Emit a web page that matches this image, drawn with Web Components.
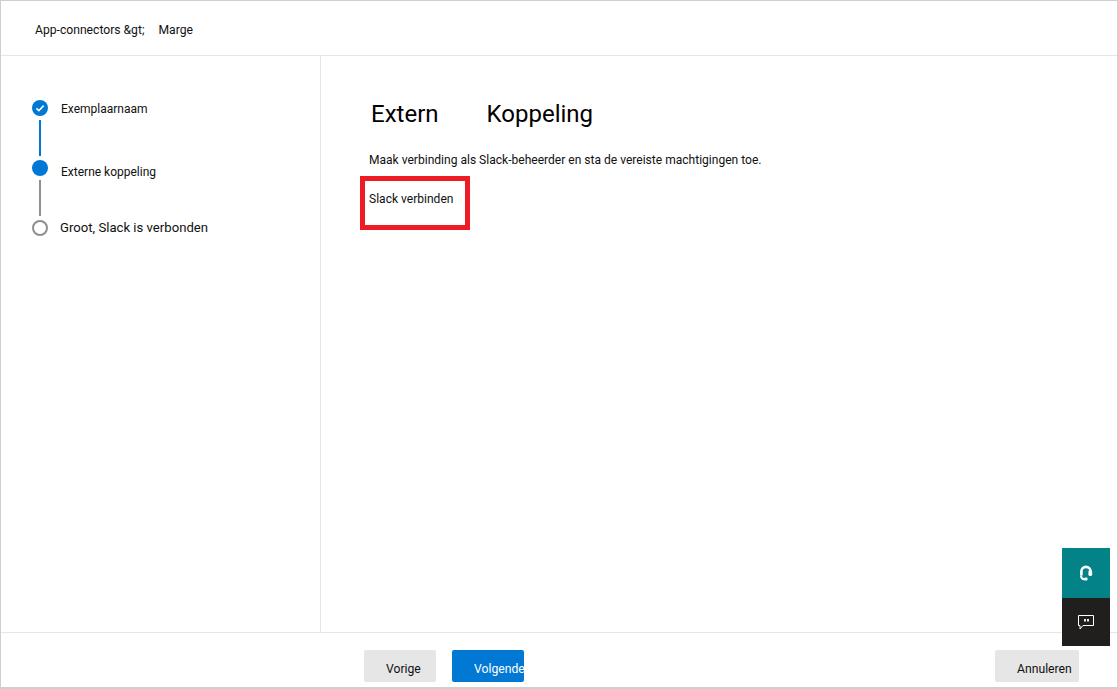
<!DOCTYPE html>
<html>
<head>
<meta charset="utf-8">
<title>App-connectors</title>
<style>
  html, body { margin: 0; height: 100%; }
  body { font-family: Roboto, "Liberation Sans", sans-serif; color: #111; background: #fff; overflow: hidden; }
</style>
</head>
<body>
<wizard-page>
  <span slot="crumb">App-connectors &amp;gt;</span>
  <span slot="crumb">Marge</span>

  <wizard-step slot="steps" state="done" line="blue">Exemplaarnaam</wizard-step>
  <wizard-step slot="steps" state="current" line="grey" nudge="down">Externe koppeling</wizard-step>
  <wizard-step slot="steps" state="todo" wide>Groot, Slack is verbonden</wizard-step>

  <connect-panel>
    <span slot="title">Extern</span>
    <span slot="title">Koppeling</span>
    <span slot="text">Maak verbinding als Slack-beheerder en sta de vereiste machtigingen toe.</span>
    <span slot="action">Slack verbinden</span>
  </connect-panel>

  <wizard-button slot="nav">Vorige</wizard-button>
  <wizard-button slot="nav" primary>Volgende</wizard-button>
  <wizard-button slot="cancel" wide>Annuleren</wizard-button>

  <help-dock slot="dock"></help-dock>
</wizard-page>

<script>
class WizardPage extends HTMLElement {
  constructor() {
    super();
    this.attachShadow({ mode: "open" });
    this.shadowRoot.innerHTML = `
      <style>
        :host {
          display: grid;
          grid-template-rows: 55px 1fr 55px;
          box-sizing: border-box;
          width: 1118px;
          height: 689px;
          border: 1px solid #cfcfcf;
          border-bottom-width: 2px;
          position: relative;
          font-size: 12.15px;
        }
        header {
          display: flex;
          align-items: center;
          gap: 14px;
          padding: 4px 0 0 34px;
          border-bottom: 1px solid #e6e6e6;
        }
        main { display: grid; grid-template-columns: 320px 1fr; min-height: 0; }
        aside { border-right: 1px solid #e6e6e6; padding: 44px 0 0 31px; }
        footer {
          display: flex;
          align-items: flex-start;
          padding: 17px 38px 0 363px;
          border-top: 1px solid #e6e6e6;
        }
        .nav { display: flex; gap: 16px; }
        .cancel { margin-left: auto; }
      </style>
      <header><slot name="crumb"></slot></header>
      <main>
        <aside><slot name="steps"></slot></aside>
        <section><slot></slot></section>
      </main>
      <footer>
        <div class="nav"><slot name="nav"></slot></div>
        <div class="cancel"><slot name="cancel"></slot></div>
      </footer>
      <slot name="dock"></slot>
    `;
  }
}

class WizardStep extends HTMLElement {
  constructor() {
    super();
    this.attachShadow({ mode: "open" });
    const state = this.getAttribute("state");
    const line = this.getAttribute("line");
    const check = state === "done"
      ? `<svg viewBox="0 0 16 16" width="16" height="16"><path d="M4.400 8.300 6.900 10.700 11.600 5.600" fill="none" stroke="#fff" stroke-width="1.600"/></svg>`
      : "";
    this.shadowRoot.innerHTML = `
      <style>
        :host { display: block; font-size: 12px; }
        .row { display: grid; grid-template-columns: 16px 1fr; column-gap: 13px; height: 16px; white-space: nowrap; }
        .dot { width: 16px; height: 16px; border-radius: 50%; box-sizing: border-box; background: #0078d4; display: block; }
        .dot svg { display: block; }
        .label { height: 16px; line-height: 18px; }
        :host([state="todo"]) .dot { background: #fff; border: 2px solid #8f8f8f; }
        :host([nudge="down"]) .label { line-height: 24px; }
        :host([wide]) { font-size: 13.15px; }
        :host([wide]) .row { column-gap: 12px; }
        :host([wide]) .label { line-height: 16px; }
        .line { width: 2px; height: 36px; margin: 4px 0 4px 7px; }
        .blue { background: #0078d4; }
        .grey { background: #8f8f8f; }
      </style>
      <div class="row"><span class="dot">${check}</span><span class="label"><slot></slot></span></div>
      ${line ? `<div class="line ${line}"></div>` : ""}
    `;
  }
}

class ConnectPanel extends HTMLElement {
  constructor() {
    super();
    this.attachShadow({ mode: "open" });
    this.shadowRoot.innerHTML = `
      <style>
        :host { display: block; padding: 41px 0 0 48px; }
        h1 { display: flex; gap: 48px; margin: 0 0 0 2px; font-size: 24px; font-weight: 400; line-height: 35px; color: #000; }
        p { margin: 20px 0 0; font-size: 12.05px; line-height: 16px; }
        .action { position: relative; margin-top: 23px; line-height: 16px; font-size: 12.05px; }
        /* red annotation drawn over the screenshot */
        .mark {
          position: absolute;
          left: -9px; top: -15px;
          width: 110px; height: 54px;
          box-sizing: border-box;
          border: 5px solid #ed1c24;
        }
      </style>
      <h1><slot name="title"></slot></h1>
      <p><slot name="text"></slot></p>
      <div class="action"><slot name="action"></slot><div class="mark"></div></div>
    `;
  }
}

class WizardButton extends HTMLElement {
  constructor() {
    super();
    this.attachShadow({ mode: "open" });
    this.shadowRoot.innerHTML = `
      <style>
        :host {
          display: block;
          box-sizing: border-box;
          width: 72px;
          height: 32px;
          padding: 11px 0 0 22px;
          background: #e6e6e6;
          border-radius: 2px;
          font-size: 12.2px;
          line-height: 16px;
          white-space: nowrap;
        }
        :host([wide]) { width: 84px; }
        :host([primary]) { background: #0078d4; color: #fff; }
      </style>
      <slot></slot>
    `;
  }
}

class HelpDock extends HTMLElement {
  constructor() {
    super();
    this.attachShadow({ mode: "open" });
    this.shadowRoot.innerHTML = `
      <style>
        /* floats over the page corner */
        :host { position: absolute; right: 7px; top: 547px; width: 48px; display: block; }
        div { display: flex; align-items: center; justify-content: center; }
        .help { height: 50px; background: #038387; }
        .chat { height: 48px; background: #201f1e; }
        svg { display: block; }
      </style>
      <div class="help">
        <svg width="14" height="16" viewBox="0 0 14 16" fill="none" stroke="#fff">
          <path d="M2.400 10.500V6.500a4.600 4.600 0 0 1 9.200 0" stroke-width="2.600"/>
          <rect x="9.400" y="5.500" width="3.800" height="5.500" rx="1.400" fill="#fff" stroke="none"/>
          <path d="M2 10.500c0 2.400 1.800 3.700 4 3.900" stroke-width="2"/>
          <rect x="5.500" y="12.600" width="3" height="2.800" rx="1" fill="#fff" stroke="none"/>
        </svg>
      </div>
      <div class="chat">
        <svg width="18" height="16" viewBox="0 0 18 16" fill="none" stroke="#fff" stroke-width="1">
          <path d="M1.500 1.500h15v10H6L3 15v-3.500H1.500z"/>
          <path d="M8 5v2.500M11 5v2.500" stroke-width="1.800"/>
        </svg>
      </div>
    `;
  }
}

customElements.define("wizard-page", WizardPage);
customElements.define("wizard-step", WizardStep);
customElements.define("connect-panel", ConnectPanel);
customElements.define("wizard-button", WizardButton);
customElements.define("help-dock", HelpDock);
</script>
</body>
</html>
